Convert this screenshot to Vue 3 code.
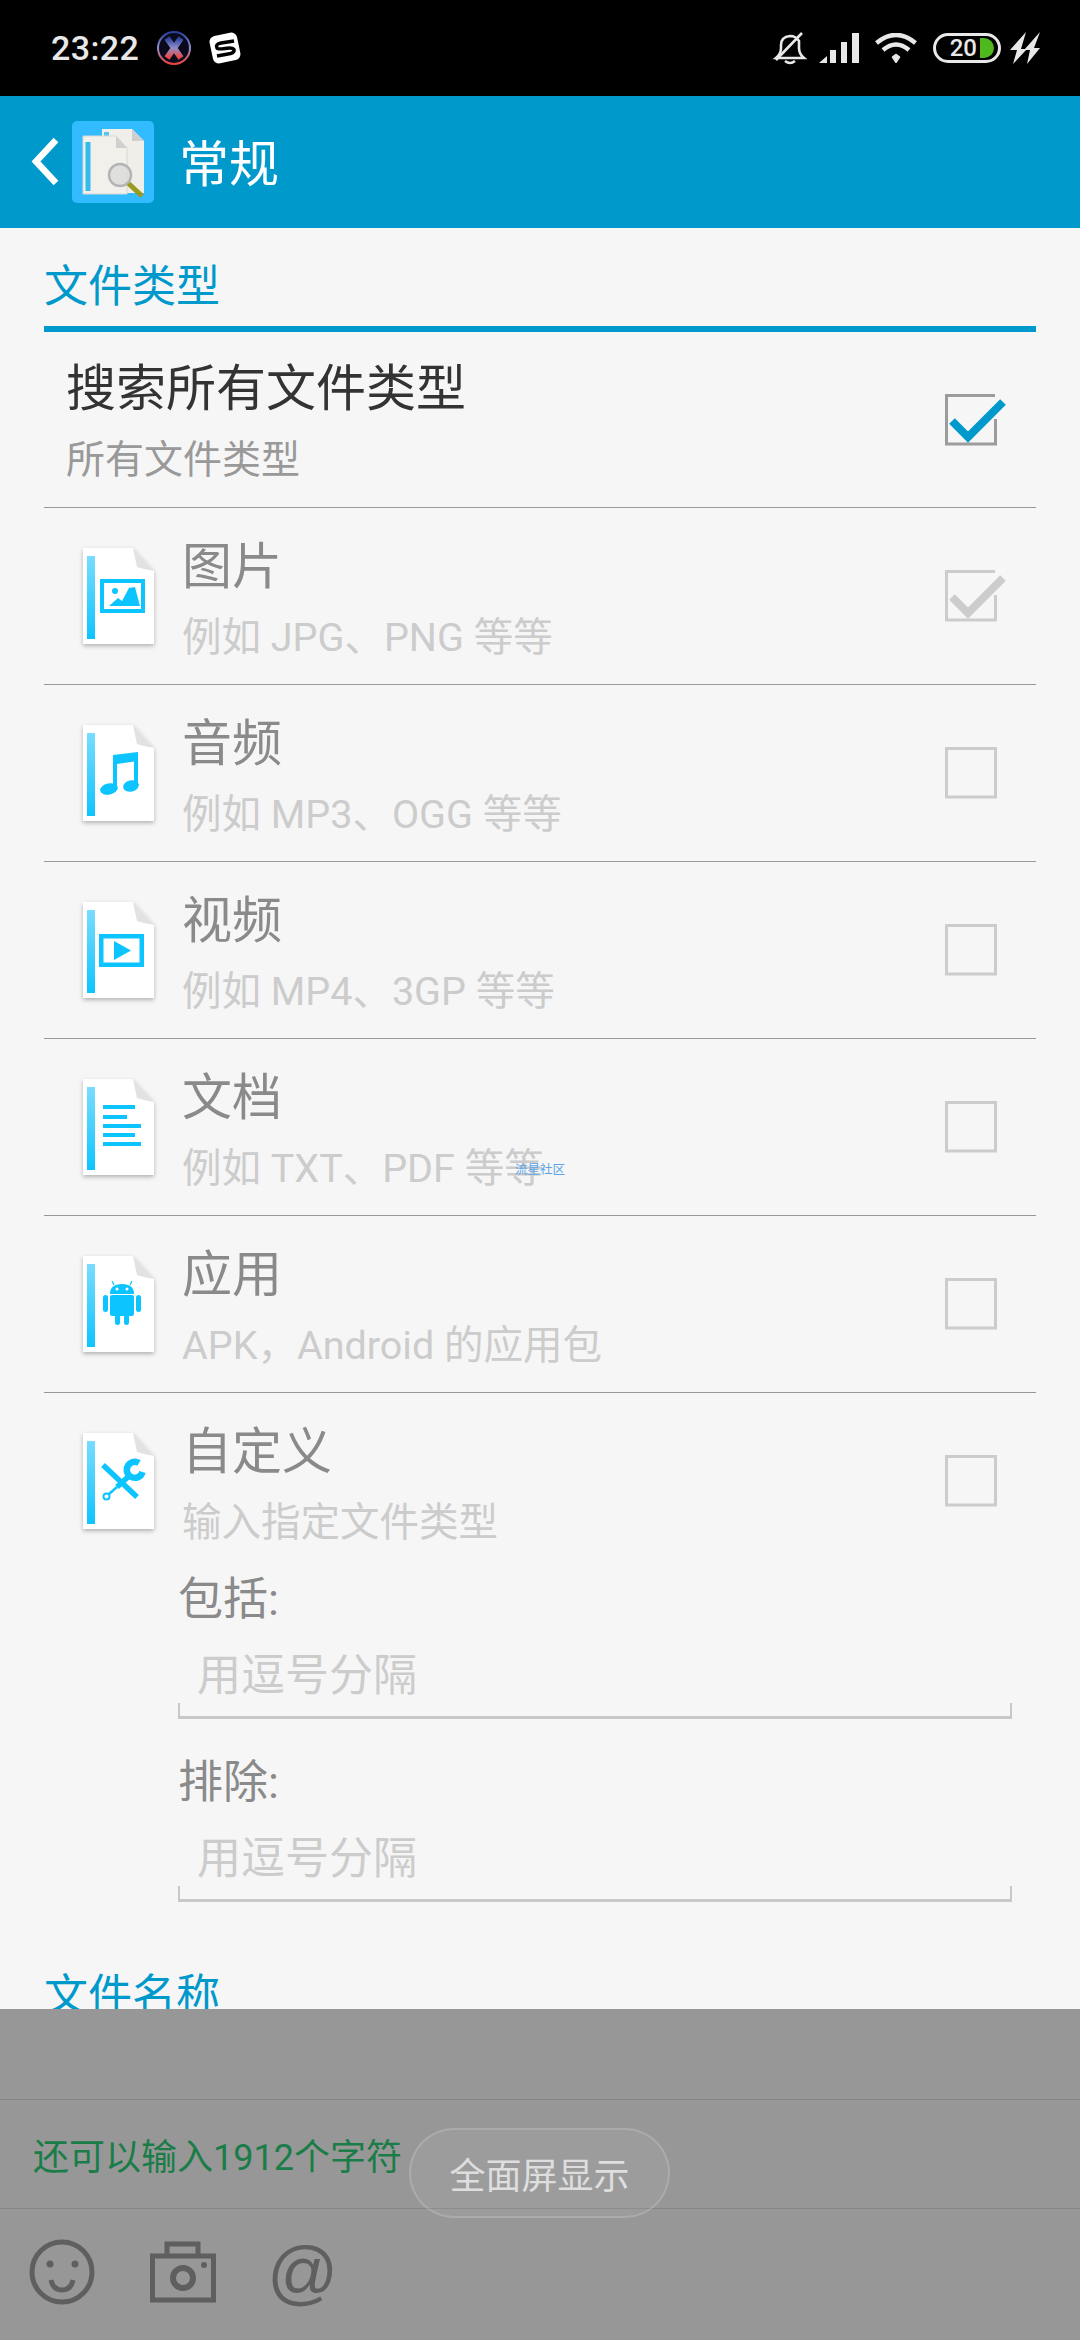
<script setup>
const fileTypes = [
  { key: 'image', title: '图片', sub: '例如 JPG、PNG 等等', state: 'disabled' },
  { key: 'audio', title: '音频', sub: '例如 MP3、OGG 等等', state: 'off' },
  { key: 'video', title: '视频', sub: '例如 MP4、3GP 等等', state: 'off' },
  { key: 'doc', title: '文档', sub: '例如 TXT、PDF 等等', state: 'off' },
  { key: 'app', title: '应用', sub: 'APK，Android 的应用包', state: 'off' },
  { key: 'custom', title: '自定义', sub: '输入指定文件类型', state: 'off' }
]
const docLines = [
  { y: 26, w: 32 },
  { y: 36, w: 24 },
  { y: 45, w: 38 },
  { y: 54, w: 32 },
  { y: 63, w: 38 }
]
</script>

<template>
  <div class="screen">
    <header class="status-bar">
      <div class="status-left">
        <span class="time">23:22</span>
        <svg class="st-x" width="36" height="36" viewBox="0 0 36 36">
          <defs>
            <linearGradient id="xGrad" x1="0" y1="0" x2="0" y2="1">
              <stop offset="0" stop-color="#2b3f9e" />
              <stop offset="0.5" stop-color="#8f8fc8" />
              <stop offset="1" stop-color="#f0433a" />
            </linearGradient>
          </defs>
          <circle cx="18" cy="18" r="16" fill="#0a0a1c" stroke="url(#xGrad)" stroke-width="2" />
          <path d="M11 8 L25 28 M25 8 L11 28" stroke="url(#xGrad)" stroke-width="6" fill="none" />
        </svg>
        <svg class="st-s" width="34" height="34" viewBox="0 0 34 34">
          <rect x="3" y="3" width="28" height="28" rx="6" fill="#fff" transform="rotate(-12 17 17)" />
          <path d="M26 10 L13 12 Q7 13 9 17 Q10 18.500 17 17.500 Q27 16 26 20 Q25 22.500 20 23 L9 25" fill="none" stroke="#000" stroke-width="3.500" />
        </svg>
      </div>
      <div class="status-right">
        <svg width="34" height="34" viewBox="0 0 34 34" fill="none" stroke="#e8e8e8" stroke-width="2.600">
          <path d="M3 27 Q8 23 8 17 V14 Q8 6 17 5 Q23 5 26 10 V17 Q26 23 31 27 Z" />
          <path d="M12 30 Q17 34 22 30" />
          <path d="M3 29 L29 2" />
        </svg>
        <svg class="st-signal" width="40" height="30" viewBox="0 0 40 30" fill="#e8e8e8">
          <path d="M0 30 L8 23 V30 Z" />
          <rect x="11" y="17" width="6" height="13" />
          <rect x="22" y="9" width="6" height="21" />
          <rect x="33" y="0" width="7" height="30" />
        </svg>
        <svg class="st-wifi" width="42" height="30" viewBox="0 0 42 30" fill="none" stroke="#e8e8e8" stroke-width="4.500">
          <path d="M1.500 10 Q21 -6 40.500 10" />
          <path d="M8 17 Q21 6 34 17" />
          <path d="M17 24 L21 21 L25 24 L21 30 Z" fill="#e8e8e8" stroke="#e8e8e8" stroke-width="1" />
        </svg>
        <div class="battery">
          <span class="bat-num">20</span>
          <span class="bat-fill"></span>
        </div>
        <svg class="st-bolt" width="30" height="32" viewBox="0 0 30 32" fill="#e8e8e8">
          <path d="M16 0 L0 18 H7 L3 32 L17 17 H11 Z" />
          <path d="M30 0 L14 18 H20 L17 32 L30 16 H24 Z" />
        </svg>
      </div>
    </header>

    <div class="app-bar">
      <svg class="back" width="30" height="52" viewBox="0 0 30 52" fill="none">
        <path d="M26 4 L6 25.500 L26 47" stroke="#fff" stroke-width="6.500" />
      </svg>
      <svg class="app-icon" width="82" height="82" viewBox="0 0 82 82">
        <rect width="82" height="82" rx="5" fill="#33bbff" />
        <path d="M30 8 H60 L72 20 V72 H30 Z" fill="#efeee8" />
        <path d="M60 8 L72 20 H60 Z" fill="#cfcfcf" />
        <rect x="32" y="11" width="5" height="5" fill="#55c8ee" />
        <path d="M11 15 H44 L55 27 V73 H11 Z" fill="#f1f0ea" stroke="#d8d8d2" stroke-width="1" />
        <path d="M44 15 L55 27 H44 Z" fill="#d0d0d0" />
        <rect x="13.500" y="21" width="5" height="49" fill="#33bbee" />
        <path d="M56 62 L70 75" stroke="#9a9a20" stroke-width="5" />
        <circle cx="48" cy="54" r="11" fill="#dcdcdc" fill-opacity=".85" stroke="#b4b4b4" stroke-width="2.500" />
      </svg>
      <span class="bar-title">常规</span>
    </div>

    <main class="content">
      <h2 class="section-head">文件类型</h2>

      <div class="row row-first">
        <div class="row-text first-text">
          <div class="row-title dark">搜索所有文件类型</div>
          <div class="row-sub mid">所有文件类型</div>
        </div>
        <svg class="check" width="52" height="52" viewBox="0 0 52 52" fill="none">
          <path d="M50 1.500 H1.500 V50 H50.500 V25" stroke="#9c9c9c" stroke-width="3" />
          <path d="M7 27 L23 43 L58 8" stroke="#0099cc" stroke-width="8" />
        </svg>
      </div>

      <div v-for="item in fileTypes" :key="item.key" class="row">
        <svg class="doc" width="71" height="96" viewBox="0 0 71 96">
          <defs>
            <linearGradient :id="'stripe-' + item.key" x1="0" y1="0" x2="0" y2="1">
              <stop offset="0" stop-color="#7adcff" />
              <stop offset="1" stop-color="#0cc4ff" />
            </linearGradient>
          </defs>
          <path d="M0 0 H50 L71 23 V96 H0 Z" fill="#fff" />
          <path d="M50 0 L71 23 Q60 21 54 19 Q52 10 50 0 Z" fill="#e2e2e2" />
          <rect x="4" y="8" width="8" height="83" :fill="'url(#stripe-' + item.key + ')'" />

          <g v-if="item.key === 'image'" fill="#0cc4ff">
            <path d="M17 31 H62 V65 H17 Z M21 35 V61 H58 V35 Z" fill-rule="evenodd" />
            <circle cx="32" cy="43" r="3" />
            <path d="M26 58 L35 50 L39 53 L46 40 L52 39 L57 58 Z" />
          </g>
          <g v-else-if="item.key === 'audio'" fill="#0cc4ff">
            <path d="M30 30 L55 27 V36 L34 39 Z" />
            <rect x="30" y="30" width="4" height="34" />
            <rect x="51" y="28" width="4" height="33" />
            <ellipse cx="26" cy="64" rx="9" ry="5.500" transform="rotate(-12 26 64)" />
            <ellipse cx="48" cy="61" rx="8" ry="5.500" transform="rotate(-12 48 61)" />
          </g>
          <g v-else-if="item.key === 'video'" fill="#0cc4ff">
            <path d="M16 32 H61 V65 H16 Z M20.500 36.500 V60.500 H56.500 V36.500 Z" fill-rule="evenodd" />
            <path d="M31 39 L48 48.500 L31 58 Z" />
          </g>
          <g v-else-if="item.key === 'doc'" fill="#0cc4ff">
            <rect v-for="line in docLines" :key="line.y" x="20" :y="line.y" :width="line.w" height="4" />
          </g>
          <g v-else-if="item.key === 'app'" fill="#0cc4ff">
            <path d="M27 38 Q27 28 39 28 Q51 28 51 38 Z" />
            <path d="M31 29 L29 25 M47 29 L49 25" stroke="#0cc4ff" stroke-width="1.200" />
            <circle cx="34" cy="33" r="1.500" fill="#fff" />
            <circle cx="44" cy="33" r="1.500" fill="#fff" />
            <rect x="27" y="39" width="24" height="21" rx="2" />
            <rect x="20" y="39" width="5" height="17" rx="2.500" />
            <rect x="53" y="39" width="5" height="17" rx="2.500" />
            <rect x="32" y="58" width="5" height="11" rx="2.500" />
            <rect x="41" y="58" width="5" height="11" rx="2.500" />
          </g>
          <g v-else fill="none" stroke="#0cc4ff">
            <path d="M20 32 L54 64" stroke-width="5.500" />
            <path d="M46 43 L34 54" stroke-width="5.500" />
            <path d="M34 54 L26 61" stroke-width="2.500" />
            <circle cx="23.500" cy="63.500" r="3" stroke-width="2" />
            <path d="M56 30 A8 8 0 1 0 59.500 39" stroke-width="6.500" />
          </g>
        </svg>
        <div class="row-text">
          <div class="row-title">{{ item.title }}</div>
          <div class="row-sub">{{ item.sub }}</div>
        </div>
        <svg v-if="item.state === 'disabled'" class="check" width="52" height="52" viewBox="0 0 52 52" fill="none">
          <path d="M50 1.500 H1.500 V50 H50.500 V25" stroke="#cccccc" stroke-width="3" />
          <path d="M7 27 L23 43 L58 8" stroke="#cccccc" stroke-width="8" />
        </svg>
        <svg v-else class="check" width="52" height="52" viewBox="0 0 52 52" fill="none">
          <rect x="1.500" y="1.500" width="49" height="48.500" stroke="#cccccc" stroke-width="3" />
        </svg>
      </div>

      <div class="fields">
        <label class="field-label">包括:</label>
        <div class="field-input"><input type="text" placeholder="用逗号分隔" /></div>
        <label class="field-label second">排除:</label>
        <div class="field-input"><input type="text" placeholder="用逗号分隔" /></div>
      </div>

      <h2 class="section-head plain">文件名称</h2>

      <span class="watermark">流星社区</span>
    </main>

    <footer class="panel">
      <div class="panel-top"></div>
      <div class="panel-count">还可以输入1912个字符</div>
      <div class="panel-tools">
        <svg width="66" height="66" viewBox="0 0 66 66" fill="none" stroke="#5f5f5f" stroke-width="5">
          <ellipse cx="33" cy="33" rx="30" ry="30" />
          <circle cx="21" cy="25" r="3.500" fill="#5f5f5f" stroke="none" />
          <circle cx="46" cy="25" r="3.500" fill="#5f5f5f" stroke="none" />
          <path d="M22 41 Q24 51 33 51 Q42 51 44 41" />
        </svg>
        <svg width="66" height="62" viewBox="0 0 66 62" fill="none" stroke="#5f5f5f" stroke-width="5">
          <rect x="2.500" y="15" width="61" height="44" />
          <path d="M17 15 V3 H48 V15" />
          <circle cx="33" cy="37" r="10" stroke-width="6" />
          <circle cx="54" cy="24" r="3" fill="#5f5f5f" stroke="none" />
        </svg>
        <span class="at">@</span>
      </div>
      <button class="full-btn" type="button">全面屏显示</button>
    </footer>
  </div>
</template>

<style>
body { background: #f5f5f5; }
</style>

<style scoped>
.screen { position: relative; width: 1080px; height: 2340px; display: flex; flex-direction: column; overflow: hidden; background: #f6f6f6; font-family: Roboto, "Noto Sans CJK SC", sans-serif; }

.status-bar { flex: 0 0 96px; display: flex; align-items: center; justify-content: space-between; background: #000; padding: 0 40px 0 51px; }
.status-left, .status-right { display: flex; align-items: center; }
.time { color: #e8e8e8; font-size: 34px; font-weight: 500; letter-spacing: .4px; }
.st-x { margin-left: 17px; }
.st-s { margin-left: 16px; }
.st-signal { margin-left: 12px; }
.st-wifi { margin-left: 16px; }
.st-bolt { margin-left: 9px; }
.battery { display: flex; align-items: center; justify-content: flex-end; gap: 3px; width: 68px; height: 30px; margin-left: 16px; padding-right: 4px; box-sizing: border-box; border: 3px solid #e8e8e8; border-radius: 15px; }
.bat-num { color: #e8e8e8; font-size: 24px; font-weight: 500; line-height: 1; }
.bat-fill { width: 14px; height: 20px; background: #4fb81f; border-radius: 0 10px 10px 0; }

.app-bar { flex: 0 0 132px; display: flex; align-items: center; background: #0099cc; padding-left: 30px; }
.app-icon { margin-left: 12px; }
.bar-title { margin: -5px 0 0 25px; color: #fff; font-size: 50px; }

.content { position: relative; flex: 1; min-height: 0; overflow: hidden; padding: 0 44px; }
.section-head { margin: 0; padding: 29px 0 9px; color: #0099cc; font-size: 44px; font-weight: 400; line-height: 60px; border-bottom: 6px solid #0099cc; }
.section-head.plain { margin-top: 35px; border-bottom: 0; }

.row { display: flex; align-items: center; height: 177px; box-sizing: border-box; padding-right: 39px; border-top: 1px solid #999; }
.row-first { height: 175px; border-top: 0; }
.row-text { flex: 1; align-self: flex-start; padding-top: 27px; }
.first-text { padding-top: 25px; padding-left: 22px; }
.row-title { color: #8a8a8a; font-size: 50px; line-height: 64px; }
.row-title.dark { color: #333; }
.row-sub { margin-top: 14px; color: #cccccc; font-size: 39.5px; line-height: 50px; }
.row-sub.mid { margin-top: 14px; color: #999; font-size: 39px; }
.doc { flex: none; margin: 0 28px 0 39px; overflow: visible; filter: drop-shadow(0 2px 2px rgba(0,0,0,.28)); }
.check { flex: none; overflow: visible; }

.fields { margin: 0 24px 0 134px; }
.field-label { display: block; color: #8a8a8a; font-size: 45px; line-height: 62px; }
.field-label.second { margin-top: 33px; }
.field-input { position: relative; height: 85px; border-bottom: 3px solid #c8c8c8; box-sizing: content-box; }
.field-input::before, .field-input::after { content: ""; position: absolute; bottom: 0; width: 2px; height: 13px; background: #c8c8c8; }
.field-input::before { left: 0; }
.field-input::after { right: 0; }
.field-input input { width: 100%; height: 100%; box-sizing: border-box; border: 0; outline: 0; background: transparent; padding: 5px 0 0 19px; font: 44px Roboto, "Noto Sans CJK SC", sans-serif; color: #555; }
.field-input input::placeholder { color: #cccccc; opacity: 1; }

.watermark { position: absolute; left: 515px; top: 933px; color: #5aa5e8; font-size: 12.5px; line-height: 18px; }

.panel { position: relative; flex: 0 0 331px; background: #979797; }
.panel-top { height: 90px; }
.panel-count { height: 108px; box-sizing: content-box; display: flex; align-items: center; padding-left: 33px; border-top: 1px solid #868686; border-bottom: 1px solid #868686; color: #1a7d48; font-size: 36px; }
.panel-tools { display: flex; align-items: center; gap: 55px; padding: 30px 0 0 29px; }
.at { color: #5f5f5f; font-family: "Liberation Sans", sans-serif; font-style: italic; font-size: 70px; line-height: 66px; margin-left: -5px; }
.full-btn { position: absolute; left: 409px; top: 119px; width: 261px; height: 90px; border: 2px solid rgba(255,255,255,.15); border-radius: 45px; background: rgba(255,255,255,.05); color: #dedede; font: 36px Roboto, "Noto Sans CJK SC", sans-serif; padding: 0; }
</style>
